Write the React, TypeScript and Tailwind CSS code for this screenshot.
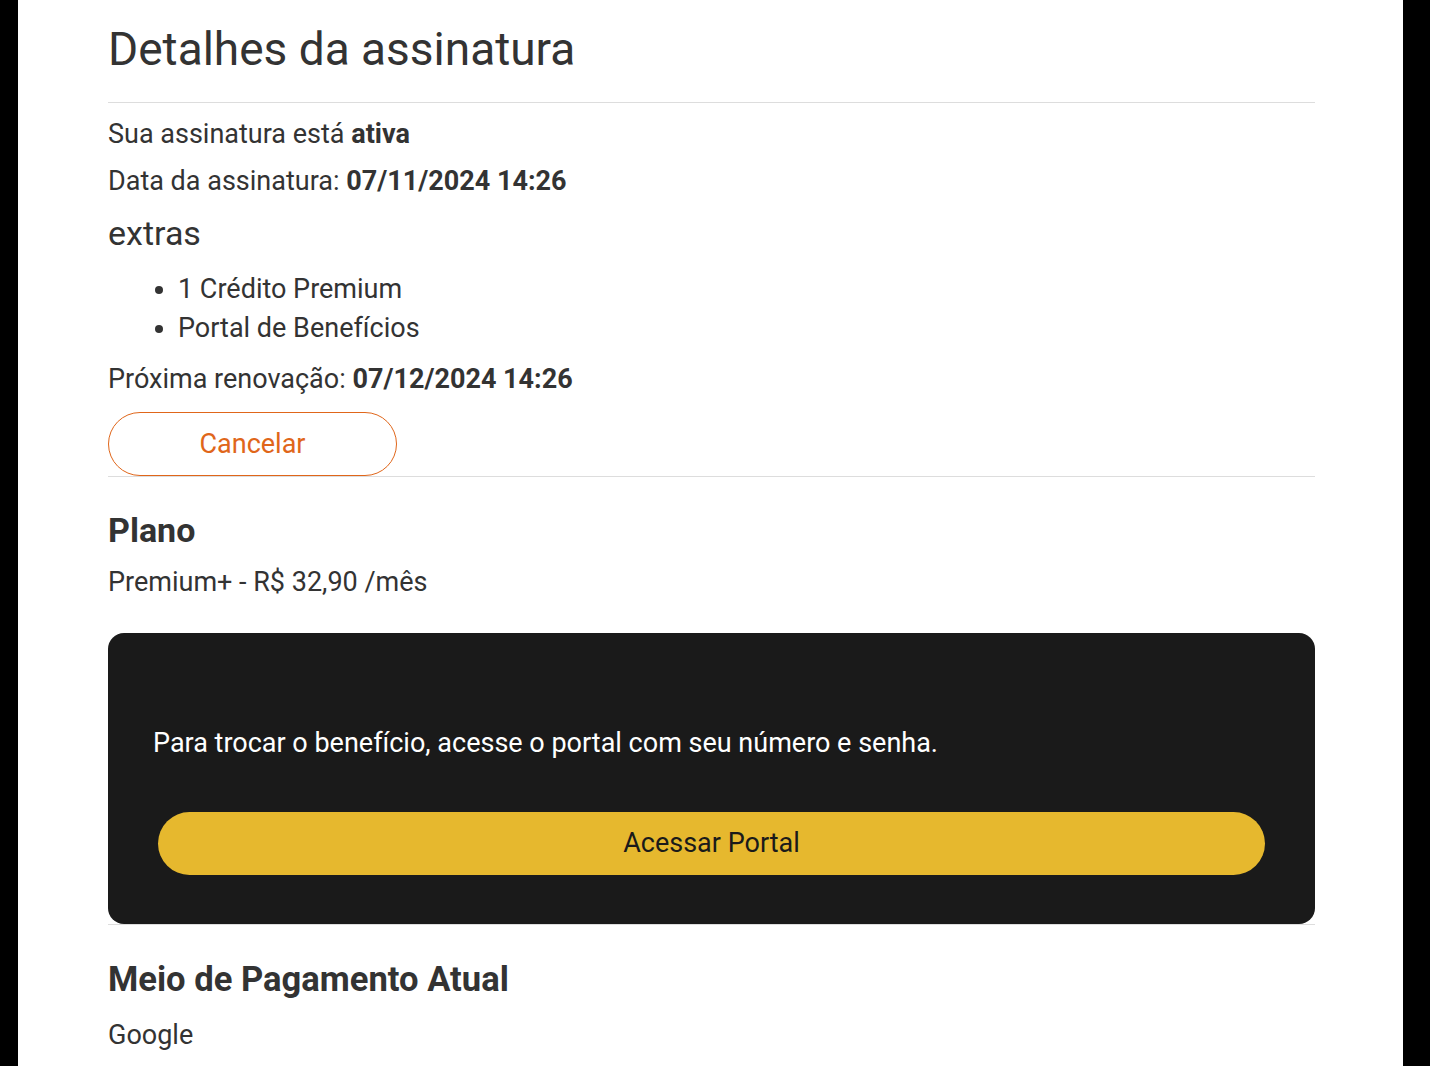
import React from "react";

export default function App() {
  return (
    <div className="min-h-screen w-full bg-black" style={{ fontFamily: "Roboto, 'Noto Sans', sans-serif" }}>
      <div className="ml-[18px] w-[1385px] min-h-[1066px] bg-white pl-[90px] pr-[88px] text-[#333333]">
        <h1 className="pt-[23px] pb-[27px] text-[46px] leading-[52px] font-normal">Detalhes da assinatura</h1>
        <div className="h-px bg-[#dddddd]" />
        <p className="mt-[15px] text-[27px] leading-[32px]">
          Sua assinatura está <span className="font-bold">ativa</span>
        </p>
        <p className="mt-[15px] text-[27px] leading-[32px]">
          Data da assinatura: <span className="font-bold">07/11/2024 14:26</span>
        </p>
        <p className="mt-[16px] text-[34px] leading-[40px]">extras</p>
        <ul className="mt-[17px] list-disc pl-[70px] text-[27px] leading-[39px]">
          <li>1 Crédito Premium</li>
          <li>Portal de Benefícios</li>
        </ul>
        <p className="mt-[15px] text-[27px] leading-[32px]">
          Próxima renovação: <span className="font-bold">07/12/2024 14:26</span>
        </p>
        <button className="mt-[17px] flex h-[64px] w-[289px] items-center justify-center rounded-full border border-[#e0661a] text-[27px] text-[#e0661a]">
          Cancelar
        </button>
        <div className="h-px bg-[#dddddd]" />
        <h2 className="mt-[33px] text-[34px] leading-[40px] font-bold">Plano</h2>
        <p className="mt-[16px] text-[27px] leading-[32px]">Premium+ - R$ 32,90 /mês</p>
        <div className="mt-[35px] flex h-[291px] flex-col rounded-[16px] bg-[#1a1a1a] px-[45px] pt-[94px]">
          <p className="text-[27px] leading-[32px] text-white">Para trocar o benefício, acesse o portal com seu número e senha.</p>
          <button className="mt-[53px] ml-[5px] mr-[5px] flex h-[63px] items-center justify-center rounded-full bg-[#e6b82e] text-[27px] text-[#1a1a1a]">
            Acessar Portal
          </button>
        </div>
        <div className="h-px bg-[#dddddd]" />
        <h2 className="mt-[34px] text-[34.6px] leading-[40px] font-bold">Meio de Pagamento Atual</h2>
        <p className="mt-[20px] text-[27px] leading-[32px]">Google</p>
      </div>
    </div>
  );
}
